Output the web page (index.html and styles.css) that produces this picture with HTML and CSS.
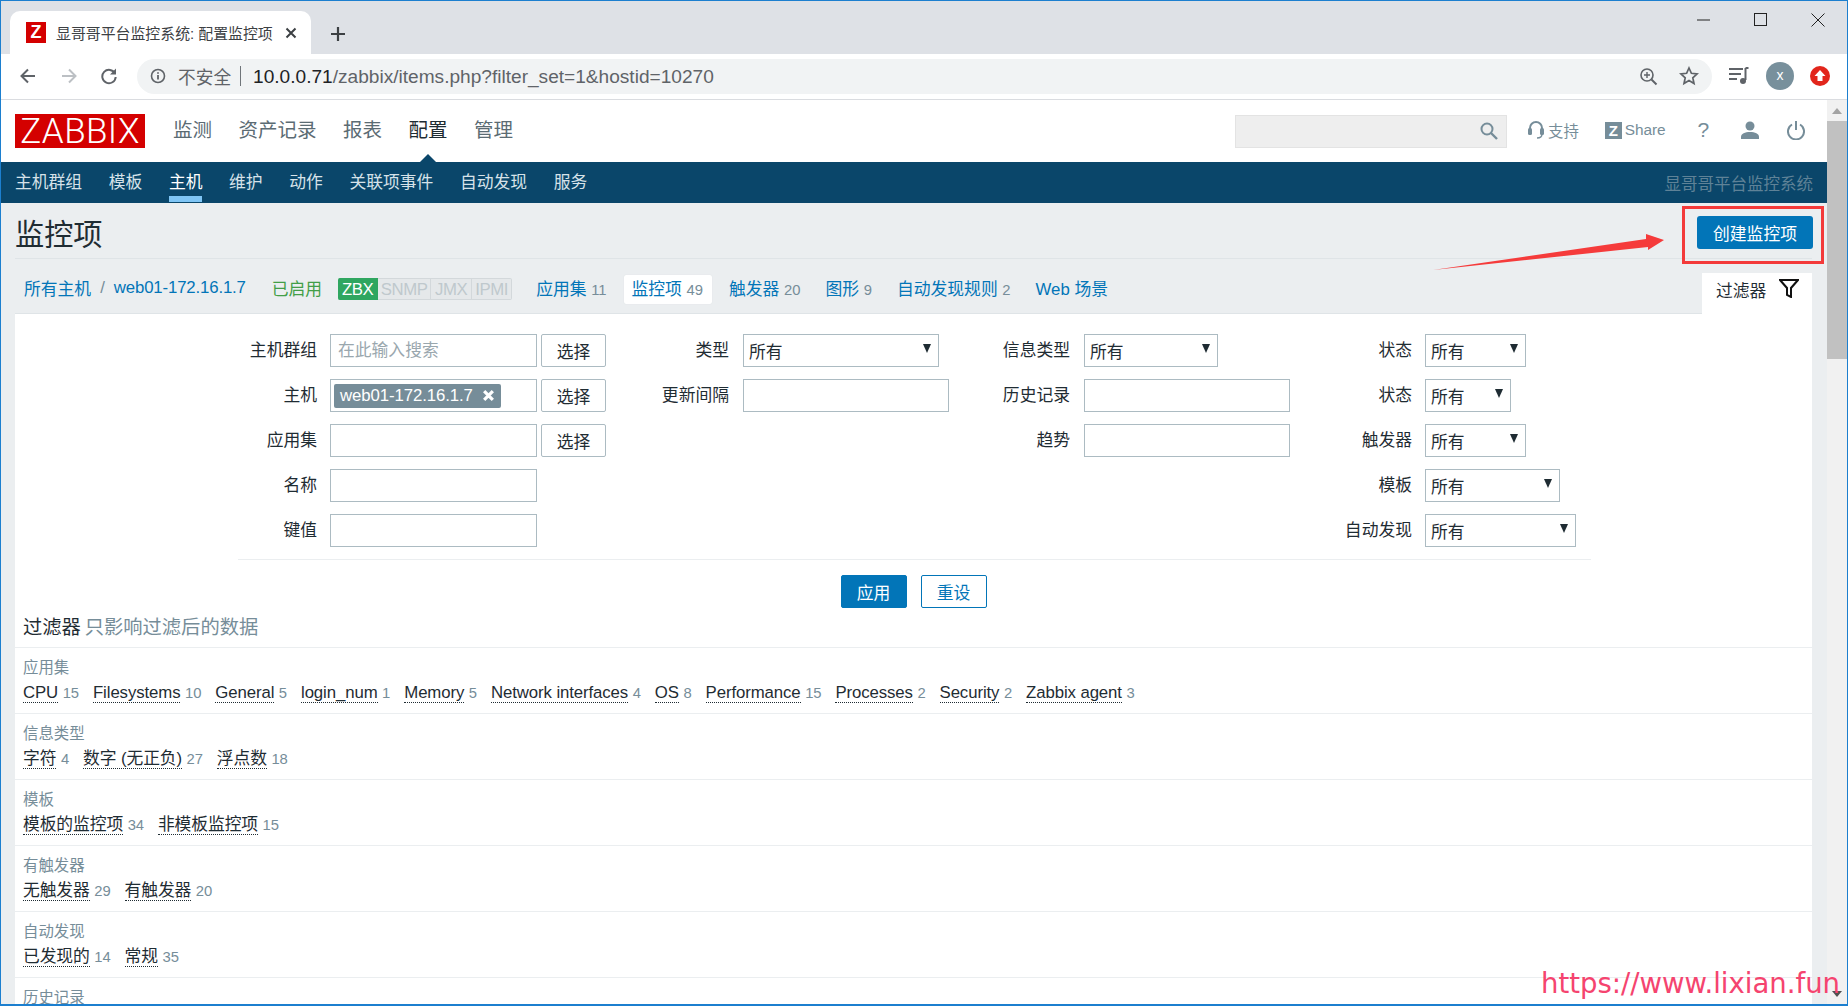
FILE: index.html
```html
<!DOCTYPE html>
<html lang="zh-CN">
<head>
    <meta charset="UTF-8">
    <title>显哥哥平台监控系统: 配置监控项</title>
    <link rel="stylesheet" href="styles.css">
</head>
<body>
<div class="window">
    <!-- Вкладки браузера -->
    <div class="tabstrip">
        <div class="tab">
            <span class="favicon">Z</span>
            <span class="tab-title">显哥哥平台监控系统: 配置监控项</span>
            <svg class="tab-close" width="12" height="12" viewBox="0 0 12 12"><path d="M1.5 1.5l9 9M10.5 1.5l-9 9" stroke="#3c4043" stroke-width="2"/></svg>
        </div>
        <svg class="tab-new" width="16" height="16" viewBox="0 0 16 16"><path d="M8 1v14M1 8h14" stroke="#3c4043" stroke-width="2.2"/></svg>
        <div class="win-btns">
            <svg width="14" height="14" viewBox="0 0 14 14"><path d="M0 7h13" stroke="#222" stroke-width="1"/></svg>
            <svg width="14" height="14" viewBox="0 0 14 14"><rect x=".5" y=".5" width="12" height="12" fill="none" stroke="#222"/></svg>
            <svg width="14" height="14" viewBox="0 0 14 14"><path d="M.5.5l13 13M13.5.5l-13 13" stroke="#222"/></svg>
        </div>
    </div>

    <!-- Адресная строка -->
    <div class="toolbar">
        <svg class="tb-icon" width="18" height="18" viewBox="0 0 18 18"><path d="M16 9H3M9 2.5L2.5 9 9 15.500" fill="none" stroke="#5f6368" stroke-width="2"/></svg>
        <svg class="tb-icon" width="18" height="18" viewBox="0 0 18 18"><path d="M2 9h13M9 2.500L15.500 9 9 15.500" fill="none" stroke="#bcc0c4" stroke-width="2"/></svg>
        <svg class="tb-icon" width="18" height="18" viewBox="0 0 18 18"><path d="M15 6.500A6.700 6.700 0 1 0 15.700 10" fill="none" stroke="#5f6368" stroke-width="2"/><path d="M16 1.500V7.500H10z" fill="#5f6368"/></svg>
        <div class="omnibox">
            <svg width="16" height="16" viewBox="0 0 16 16"><circle cx="8" cy="8" r="6.500" fill="none" stroke="#5f6368" stroke-width="1.600"/><path d="M8 7v4.500M8 4.200v1.600" stroke="#5f6368" stroke-width="1.800"/></svg>
            <span class="insecure">不安全</span>
            <span class="url-sep"></span>
            <span class="url"><b>10.0.0.71</b>/zabbix/items.php?filter_set=1&amp;hostid=10270</span>
            <svg class="omni-zoom" width="19" height="19" viewBox="0 0 19 19"><circle cx="8" cy="8" r="6" fill="none" stroke="#5f6368" stroke-width="1.600"/><path d="M12.500 12.500l5 5" stroke="#5f6368" stroke-width="2"/><path d="M8 5v6M5 8h6" stroke="#5f6368" stroke-width="1.400"/></svg>
            <svg class="omni-star" width="20" height="20" viewBox="0 0 20 20"><path d="M10 2l2.400 5.300 5.700.600-4.300 3.900 1.200 5.700-5-2.900-5 2.900 1.200-5.700L1.900 7.900l5.700-.600z" fill="none" stroke="#5f6368" stroke-width="1.700"/></svg>
        </div>
        <svg class="ext-music" width="20" height="18" viewBox="0 0 20 18"><path d="M0 2h14M0 7h12M0 12h8" stroke="#5f6368" stroke-width="2"/><path d="M16.500 1v12" stroke="#5f6368" stroke-width="2"/><path d="M16.500 1h3" stroke="#5f6368" stroke-width="2"/><circle cx="14" cy="14" r="3" fill="#5f6368"/></svg>
        <span class="avatar">x</span>
        <svg class="ext-red" width="20" height="20" viewBox="0 0 20 20"><circle cx="10" cy="10" r="10" fill="#e2261c"/><path d="M10 4l5.500 6H12.500v5h-5v-5H4.500z" fill="#fff"/></svg>
    </div>

    <div class="viewport">
        <div class="page">
            <!-- Шапка Zabbix -->
            <header class="top-nav">
                <div class="logo">ZABBIX</div>
                <nav class="main-menu">
                    <a>监测</a>
                    <a>资产记录</a>
                    <a>报表</a>
                    <a class="selected">配置</a>
                    <a>管理</a>
                </nav>
                <div class="search">
                    <svg width="20" height="20" viewBox="0 0 20 20"><circle cx="8" cy="8" r="5.500" fill="none" stroke="#768d99" stroke-width="2"/><path d="M12 12l6 6" stroke="#768d99" stroke-width="2.400"/></svg>
                </div>
                <div class="top-tools">
                    <a class="tool support">
                        <svg width="16" height="20" viewBox="0 0 16 20"><path d="M2 12V8a6 6 0 0 1 12 0v4" fill="none" stroke="#768d99" stroke-width="2"/><rect x="0" y="8" width="4" height="7" rx="1.500" fill="#768d99"/><rect x="12" y="8" width="4" height="7" rx="1.500" fill="#768d99"/><path d="M14 14c0 3-2 4-5 4" fill="none" stroke="#768d99" stroke-width="1.400"/></svg>
                        支持
                    </a>
                    <a class="tool share"><span class="z-mark">Z</span>Share</a>
                    <a class="tool help">?</a>
                    <svg class="tool-user" width="18" height="18" viewBox="0 0 18 18"><circle cx="9" cy="5" r="4.500" fill="#768d99"/><path d="M0 18v-2c0-3.500 4-5 9-5s9 1.500 9 5v2z" fill="#768d99"/></svg>
                    <svg class="tool-power" width="18" height="20" viewBox="0 0 18 20"><path d="M5 4.500a8 8 0 1 0 8 0" fill="none" stroke="#768d99" stroke-width="2"/><path d="M9 1v9" stroke="#768d99" stroke-width="2"/></svg>
                </div>
            </header>

            <nav class="sub-menu">
                <a>主机群组</a>
                <a>模板</a>
                <a class="active">主机</a>
                <a>维护</a>
                <a>动作</a>
                <a>关联项事件</a>
                <a>自动发现</a>
                <a>服务</a>
                <span class="server-name">显哥哥平台监控系统</span>
            </nav>

            <main class="content">
                <div class="title-row">
                    <h1>监控项</h1>
                    <button class="btn-create">创建监控项</button>
                </div>

                <div class="host-row">
                    <a class="link">所有主机</a>
                    <span class="crumb-sep">/</span>
                    <a class="link host-name">web01-172.16.1.7</a>
                    <span class="enabled">已启用</span>
                    <div class="tags">
                        <span class="tag on">ZBX</span><span class="tag snmp">SNMP</span><span class="tag jmx">JMX</span><span class="tag ipmi">IPMI</span>
                    </div>
                    <a class="host-link first">应用集 <small>11</small></a>
                    <a class="host-link current">监控项 <small>49</small></a>
                    <a class="host-link">触发器 <small>20</small></a>
                    <a class="host-link">图形 <small>9</small></a>
                    <a class="host-link">自动发现规则 <small>2</small></a>
                    <a class="host-link">Web 场景</a>
                    <div class="filter-tab">
                        过滤器
                        <svg width="20" height="19" viewBox="0 0 20 19"><path d="M1 1h18l-7 8v9l-4-2V9z" fill="none" stroke="#111" stroke-width="2"/></svg>
                    </div>
                </div>

                <section class="panel">
                    <div class="filter-grid">
                        <div class="f-col col-1">
                            <label>主机群组</label>
                            <div class="f-field"><div class="f-input ph">在此输入搜索</div><button class="btn-pick">选择</button></div>
                            <label>主机</label>
                            <div class="f-field"><div class="f-input"><span class="chip">web01-172.16.1.7<svg width="13" height="13" viewBox="0 0 12 12"><path d="M2 2l8 8M10 2l-8 8" stroke="#fff" stroke-width="3"/></svg></span></div><button class="btn-pick">选择</button></div>
                            <label>应用集</label>
                            <div class="f-field"><div class="f-input"></div><button class="btn-pick">选择</button></div>
                            <label>名称</label>
                            <div class="f-field"><div class="f-input"></div></div>
                            <label>键值</label>
                            <div class="f-field"><div class="f-input"></div></div>
                        </div>
                        <div class="f-col col-2">
                            <label>类型</label>
                            <div class="f-field"><div class="sel w-196"><span>所有</span><i></i></div></div>
                            <label>更新间隔</label>
                            <div class="f-field"><div class="f-input w-206"></div></div>
                        </div>
                        <div class="f-col col-3">
                            <label>信息类型</label>
                            <div class="f-field"><div class="sel w-134"><span>所有</span><i></i></div></div>
                            <label>历史记录</label>
                            <div class="f-field"><div class="f-input w-206"></div></div>
                            <label>趋势</label>
                            <div class="f-field"><div class="f-input w-206"></div></div>
                        </div>
                        <div class="f-col col-4">
                            <label>状态</label>
                            <div class="f-field"><div class="sel w-101"><span>所有</span><i></i></div></div>
                            <label>状态</label>
                            <div class="f-field"><div class="sel w-86"><span>所有</span><i></i></div></div>
                            <label>触发器</label>
                            <div class="f-field"><div class="sel w-101"><span>所有</span><i></i></div></div>
                            <label>模板</label>
                            <div class="f-field"><div class="sel w-135"><span>所有</span><i></i></div></div>
                            <label>自动发现</label>
                            <div class="f-field"><div class="sel w-151"><span>所有</span><i></i></div></div>
                        </div>
                    </div>
                    <div class="filter-actions">
                        <button class="btn-apply">应用</button>
                        <button class="btn-reset">重设</button>
                    </div>

                    <!-- Подфильтры -->
                    <div class="sub-title">过滤器 <span>只影响过滤后的数据</span></div>
                    <div class="sub-group">
                        <h4>应用集</h4>
                        <div class="sub-items">
                            <a><u>CPU</u> <small>15</small></a>
                            <a><u>Filesystems</u> <small>10</small></a>
                            <a><u>General</u> <small>5</small></a>
                            <a><u>login_num</u> <small>1</small></a>
                            <a><u>Memory</u> <small>5</small></a>
                            <a><u>Network interfaces</u> <small>4</small></a>
                            <a><u>OS</u> <small>8</small></a>
                            <a><u>Performance</u> <small>15</small></a>
                            <a><u>Processes</u> <small>2</small></a>
                            <a><u>Security</u> <small>2</small></a>
                            <a><u>Zabbix agent</u> <small>3</small></a>
                        </div>
                    </div>
                    <div class="sub-group">
                        <h4>信息类型</h4>
                        <div class="sub-items">
                            <a><u>字符</u> <small>4</small></a>
                            <a><u>数字 (无正负)</u> <small>27</small></a>
                            <a><u>浮点数</u> <small>18</small></a>
                        </div>
                    </div>
                    <div class="sub-group">
                        <h4>模板</h4>
                        <div class="sub-items">
                            <a><u>模板的监控项</u> <small>34</small></a>
                            <a><u>非模板监控项</u> <small>15</small></a>
                        </div>
                    </div>
                    <div class="sub-group">
                        <h4>有触发器</h4>
                        <div class="sub-items">
                            <a><u>无触发器</u> <small>29</small></a>
                            <a><u>有触发器</u> <small>20</small></a>
                        </div>
                    </div>
                    <div class="sub-group">
                        <h4>自动发现</h4>
                        <div class="sub-items">
                            <a><u>已发现的</u> <small>14</small></a>
                            <a><u>常规</u> <small>35</small></a>
                        </div>
                    </div>
                    <div class="sub-group">
                        <h4>历史记录</h4>
                    </div>
                </section>
            </main>
        </div>

        <div class="scrollbar">
            <span class="sb-up"></span>
            <div class="sb-thumb"></div>
            <span class="sb-down"></span>
        </div>

        <!-- Пометки поверх скриншота -->
        <div class="mark-box"></div>
        <svg class="mark-arrow" width="240" height="40" viewBox="0 0 240 40"><path d="M0 37L213 6 213 1 231 7 215 17 215 14z" fill="#f53b3b"/></svg>
        <div class="watermark">https://www.lixian.fun</div>
    </div>
</div>
</body>
</html>
```

FILE: styles.css
```css
* {
    box-sizing: border-box;
}

body {
    margin: 0;
    font-family: "Liberation Sans", "Noto Sans CJK SC", sans-serif;
    font-size: 16.8px;
    color: #1f2c33;
    background: #fff;
}

a {
    text-decoration: none;
}

.window {
    width: 1848px;
    height: 1006px;
    border: 1px solid #1c7fcf;
    border-bottom-width: 2px;
    display: flex;
    flex-direction: column;
    overflow: hidden;
}

/* Браузер */
.tabstrip {
    height: 53px;
    flex: none;
    background: #dee1e6;
    display: flex;
    align-items: flex-end;
    padding-left: 9px;
}

.tab {
    width: 301px;
    height: 43px;
    background: #fff;
    border-radius: 10px 10px 0 0;
    display: flex;
    align-items: center;
    padding-left: 16px;
}

.favicon {
    width: 20px;
    height: 21px;
    background: #d40000;
    color: #fff;
    font-weight: bold;
    font-size: 18px;
    text-align: center;
    line-height: 21px;
}

.tab-title {
    margin-left: 10px;
    font-size: 14.9px;
    color: #3c4043;
    white-space: nowrap;
}

.tab-close {
    margin-left: 12px;
}

.tab-new {
    margin: 0 0 12px 19px;
}

.win-btns {
    margin-left: auto;
    align-self: flex-start;
    display: flex;
    gap: 43px;
    padding: 12px 22px 0 0;
}

.toolbar {
    height: 46px;
    flex: none;
    background: #fff;
    border-bottom: 1px solid #dadce0;
    display: flex;
    align-items: center;
    padding: 0 0 1px 18px;
}

.tb-icon {
    margin-right: 23px;
}

.tb-icon:nth-child(2) {
    margin-right: 22px;
}

.tb-icon:nth-child(3) {
    margin-right: 19px;
}

.omnibox {
    width: 1575px;
    height: 35px;
    background: #f1f3f4;
    border-radius: 18px;
    display: flex;
    align-items: center;
    padding: 0 13px 0 13px;
}

.insecure {
    margin-left: 12px;
    font-size: 17.7px;
    color: #5f6368;
}

.url-sep {
    width: 1px;
    height: 20px;
    background: #70757a;
    margin: 0 12px 0 9px;
}

.url {
    padding-top: 1px;
    font-size: 19.1px;
    color: #5f6368;
    white-space: nowrap;
}

.url b {
    font-weight: normal;
    color: #202124;
}

.omni-zoom {
    margin-left: auto;
}

.omni-star {
    margin-left: 21px;
}

.ext-music {
    margin-left: 17px;
}

.avatar {
    width: 28px;
    height: 28px;
    margin-left: 17px;
    border-radius: 50%;
    background: #78909c;
    color: #fff;
    font-size: 14px;
    line-height: 27px;
    text-align: center;
}

.ext-red {
    margin-left: 16px;
}

/* Страница */
.viewport {
    flex: 1;
    display: flex;
    position: relative;
    min-height: 0;
}

.page {
    width: 1826px;
    flex: none;
    display: flex;
    flex-direction: column;
    background: #ebeef0;
}

.top-nav {
    height: 62px;
    flex: none;
    background: #fff;
    display: flex;
    align-items: center;
    padding: 0 0 0 14px;
}

.logo {
    width: 130px;
    height: 34px;
    background: #d40000;
    color: #fff;
    font-family: Roboto, "Liberation Sans", sans-serif;
    font-weight: 300;
    font-size: 35px;
    line-height: 35px;
    text-align: center;
    letter-spacing: .4px;
}

.main-menu {
    display: flex;
    gap: 26.5px;
    margin: -6px 0 0 28px;
    font-size: 19.5px;
}

.main-menu a {
    color: #5b6b73;
    position: relative;
}

.main-menu a.selected {
    color: #1f2c33;
}

.main-menu a.selected::after {
    content: "";
    position: absolute;
    left: 7px;
    bottom: -23px;
    border: 12px solid transparent;
    border-top: 0;
    border-bottom-color: #0a466a;
}

.search {
    width: 272px;
    height: 33px;
    margin-left: auto;
    background: #eeeeee;
    border: 1px solid #e3e3e3;
    display: flex;
    align-items: center;
    justify-content: flex-end;
    padding-right: 7px;
}

.top-tools {
    display: flex;
    align-items: center;
    margin: -2px 0 0 21px;
    width: 299px;
    color: #768d99;
}

.tool {
    display: flex;
    align-items: center;
    color: #768d99;
    font-size: 15.4px;
}

.support svg {
    margin-right: 4px;
}

.share {
    margin-left: 26px;
    letter-spacing: -.1px;
}

.z-mark {
    width: 17px;
    height: 17px;
    margin-right: 3px;
    background: #768d99;
    color: #fff;
    font-weight: bold;
    font-size: 15px;
    line-height: 17px;
    text-align: center;
}

.help {
    margin-left: 32px;
    font-size: 21px;
}

.tool-user {
    margin-left: 32px;
}

.tool-power {
    margin-left: 28px;
}

.sub-menu {
    height: 41px;
    flex: none;
    background: #0a466a;
    display: flex;
    align-items: center;
    gap: 26.6px;
    padding: 0 14px;
}

.sub-menu a {
    color: #d6e2e9;
    line-height: 34px;
    height: 41px;
    padding-top: 4px;
}

.sub-menu a.active {
    color: #fff;
    position: relative;
}

.sub-menu a.active::after {
    content: "";
    position: absolute;
    left: 0;
    right: 0;
    bottom: 1px;
    height: 6px;
    background: #7fc5f5;
}

.server-name {
    margin-left: auto;
    color: #5f8297;
    font-size: 16.5px;
    padding-top: 1px;
}

.content {
    flex: 1;
    min-height: 0;
    padding: 0 15px 0 14px;
    display: flex;
    flex-direction: column;
}

.title-row {
    height: 56px;
    flex: none;
    border-bottom: 1px solid #dfe4e7;
    display: flex;
    justify-content: space-between;
    padding-top: 13px;
}

h1 {
    margin: 1px 0 0;
    font-size: 29.2px;
    font-weight: normal;
    line-height: 36px;
}

.btn-create {
    width: 116px;
    height: 33px;
    border: 0;
    border-radius: 3px;
    background: #0275b8;
    color: #fff;
    font: inherit;
    padding: 0;
    margin-right: -1px;
}

.host-row {
    height: 54px;
    flex: none;
    display: flex;
    align-items: center;
    padding: 3px 0 0 9px;
    position: relative;
}

.link,
.host-link {
    color: #0275b8;
    white-space: nowrap;
}

.host-name {
    letter-spacing: -.15px;
}

.crumb-sep {
    margin: 0 9px;
    color: #768d99;
}

.enabled {
    color: #429e47;
    margin-left: 26px;
}

.tags {
    display: flex;
    margin: 3px 0 0 16px;
    height: 22px;
}

.tag {
    height: 22px;
    line-height: 21px;
    color: #bfc8cd;
    background: #e5e8ea;
    border: 1px solid #d3d8db;
    border-left-width: 0;
    text-align: center;
    letter-spacing: -.4px;
}

.tag.snmp { width: 53px; }
.tag.jmx { width: 41px; }

.tag.ipmi {
    width: 40px;
    border-radius: 0 2px 2px 0;
}

.tag.on {
    width: 40px;
    background: #2fa660;
    border-color: #2fa660;
    color: #fff;
    border-radius: 2px 0 0 2px;
}

.host-link {
    margin-left: 25px;
}

.host-link.first {
    margin-left: 24px;
}

.host-link small {
    color: #768d99;
    font-size: 14.8px;
}

.host-link.current {
    margin: 4px 0 0 17px;
    padding: 0 9px 0 8px;
    height: 29px;
    line-height: 29px;
    background: #fff;
    border-radius: 2px;
    box-shadow: 0 0 1px #cfd5d9;
}

.host-link.current + .host-link {
    margin-left: 17px;
}

.filter-tab {
    position: absolute;
    right: 0;
    bottom: -1px;
    width: 110px;
    height: 41px;
    background: #fff;
    display: flex;
    justify-content: space-between;
    padding: 5px 13px 0 14px;
    z-index: 1;
}

.filter-tab svg {
    margin-top: 1px;
}

.panel {
    flex: 1;
    min-height: 0;
    background: #fff;
    border-top: 1px solid #dfe4e7;
    overflow: hidden;
}

.filter-grid {
    display: grid;
    grid-template-columns: 391px 341px 342px auto;
    margin: 20px 221px 0 223px;
    padding-bottom: 13px;
    border-bottom: 1px solid #ebeef0;
    height: 226px;
}

.f-col {
    display: grid;
    grid-auto-rows: 33px;
    row-gap: 12px;
    align-content: start;
    align-items: center;
    column-gap: 13px;
}

.col-1 {
    grid-template-columns: 79px auto;
}

.col-2,
.col-3 {
    grid-template-columns: 100px auto;
    column-gap: 14px;
}

.col-4 {
    grid-template-columns: 100px auto;
}

.f-col label {
    text-align: right;
    line-height: 24px;
}

.f-field {
    display: flex;
    height: 33px;
    gap: 4px;
}

.f-input {
    width: 207px;
    height: 33px;
    border: 1px solid #acbbc2;
    padding: 0 7px;
    line-height: 30px;
    display: flex;
    align-items: center;
}

.f-input.w-206 {
    width: 206px;
}

.f-input.ph {
    color: #9aa7ae;
}

.chip {
    display: flex;
    align-items: center;
    height: 24px;
    width: 167px;
    margin-left: -4px;
    padding: 0 6px;
    background: #768d99;
    color: #fff;
    border-radius: 2px;
    white-space: nowrap;
    justify-content: space-between;
    letter-spacing: -.1px;
}

.btn-pick {
    width: 65px;
    height: 33px;
    background: #fff;
    border: 1px solid #acbbc2;
    border-radius: 2px;
    color: #1f2c33;
    font: inherit;
    padding: 0;
}

.sel {
    height: 33px;
    border: 1px solid #acbbc2;
    display: flex;
    align-items: center;
    justify-content: space-between;
    padding: 1px 7px 0 5px;
}

.sel i {
    width: 0;
    height: 0;
    margin-top: -6px;
    border: 4px solid transparent;
    border-top: 9px solid #1f2c33;
    border-bottom: 0;
}

.w-196 { width: 196px; }
.w-134 { width: 134px; }
.w-101 { width: 101px; }
.w-86 { width: 86px; }
.w-135 { width: 135px; }
.w-151 { width: 151px; }

.filter-actions {
    display: flex;
    justify-content: center;
    gap: 14px;
    margin-top: 15px;
    height: 33px;
}

.btn-apply,
.btn-reset {
    width: 66px;
    height: 33px;
    border-radius: 2px;
    font: inherit;
    padding: 0;
    border: 1px solid #0275b8;
}

.btn-apply {
    background: #0275b8;
    color: #fff;
}

.btn-reset {
    background: #fff;
    color: #0275b8;
}

.sub-title {
    height: 40px;
    padding: 7px 0 0 8px;
    font-size: 19.3px;
    line-height: 26px;
    border-bottom: 1px solid #ebeef0;
    word-spacing: -1.5px;
}

.sub-title span {
    color: #768d99;
}

.sub-group {
    height: 66px;
    padding: 9px 0 0 8px;
    border-bottom: 1px solid #ebeef0;
}

h4 {
    margin: 0;
    font-size: 15.4px;
    font-weight: normal;
    line-height: 22px;
    color: #768d99;
}

.sub-items {
    display: flex;
    gap: 14px;
    line-height: 24px;
    margin-top: 2px;
    letter-spacing: -.1px;
}

.sub-items a {
    color: #1f2c33;
    white-space: nowrap;
}

.sub-items u {
    text-decoration: none;
    border-bottom: 1px dotted #1f2c33;
    padding-bottom: 0;
}

.sub-items small {
    color: #768d99;
    font-size: 14.8px;
}

/* Полоса прокрутки */
.scrollbar {
    flex: 1;
    background: #f1f1f1;
    display: flex;
    flex-direction: column;
    align-items: center;
    padding: 8px 0 7px;
}

.sb-up {
    border: 5px solid transparent;
    border-top: 0;
    border-bottom: 6px solid #a3a3a3;
}

.sb-thumb {
    width: 100%;
    height: 238px;
    margin-top: 7px;
    background: #c1c1c1;
}

.sb-down {
    margin-top: auto;
    border: 5px solid transparent;
    border-bottom: 0;
    border-top: 6px solid #505050;
}

/* Пометки */
.mark-box {
    position: absolute;
    left: 1681px;
    top: 106px;
    width: 142px;
    height: 58px;
    border: 3px solid #f33a3a;
}

.mark-arrow {
    position: absolute;
    left: 1432px;
    top: 133px;
}

.watermark {
    position: absolute;
    right: 7px;
    bottom: 4px;
    font-family: "DejaVu Sans", sans-serif;
    font-size: 27.5px;
    line-height: 34px;
    color: #f5446f;
    white-space: nowrap;
}
```
